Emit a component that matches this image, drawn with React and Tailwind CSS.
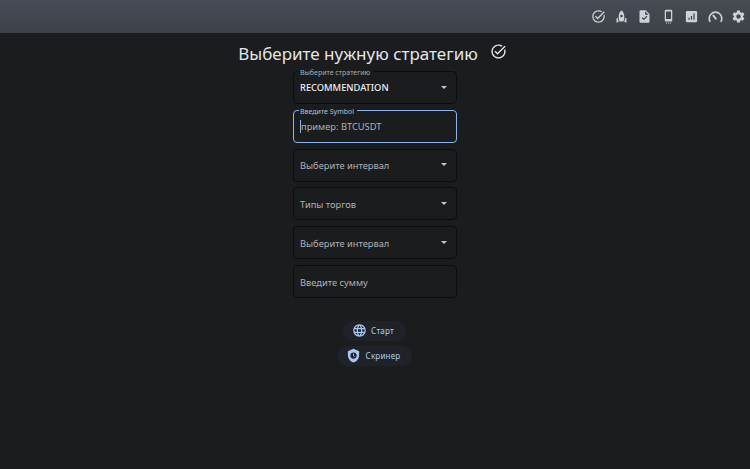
import React from 'react';

const icons = {
  task: 'M22 5.18 10.59 16.6l-4.24-4.24 1.41-1.41 2.83 2.83 10-10L22 5.18zm-2.21 5.04c.13.57.21 1.17.21 1.78 0 4.42-3.58 8-8 8s-8-3.58-8-8 3.58-8 8-8c1.58 0 3.04.46 4.28 1.25l1.44-1.44C16.1 2.67 14.13 2 12 2 6.48 2 2 6.48 2 12s4.48 10 10 10 10-4.48 10-10c0-1.19-.22-2.33-.6-3.39l-1.61 1.61z',
  rocket: 'M12 2.5s4.5 2.04 4.5 10.5c0 2.49-1.04 5.57-1.6 7H9.1c-.56-1.43-1.6-4.51-1.6-7C7.5 4.54 12 2.5 12 2.5zm2 8.5c0-1.1-.9-2-2-2s-2 .9-2 2 .9 2 2 2 2-.9 2-2zm-6.31 9.52c-.48-1.23-1.52-4.17-1.67-6.87l-1.13.75c-.56.38-.89 1-.89 1.67V22l3.69-1.48zM20 22v-5.93c0-.67-.33-1.29-.89-1.66l-1.13-.75c-.15 2.69-1.2 5.64-1.67 6.87L20 22z',
  file: 'M14 2H6c-1.1 0-1.99.9-1.99 2L4 20c0 1.1.89 2 1.99 2H18c1.1 0 2-.9 2-2V8l-6-6zm-3.06 16L7.4 14.46l1.41-1.41 2.12 2.12 4.24-4.24 1.41 1.41L10.94 18zM13 9V3.5L18.5 9H13z',
  phone: 'M16 1H8C6.9 1 6 1.9 6 3v15c0 1.1.9 2 2 2h8c1.1 0 2-.9 2-2V3c0-1.1-.9-2-2-2zm0 15H8V4h8v12zM8 21.5h1.6V23H8zm3.2 0h1.6V23h-1.6zm3.2 0H16V23h-1.6z',
  chart: 'M19 3H5c-1.1 0-2 .9-2 2v14c0 1.1.9 2 2 2h14c1.1 0 2-.9 2-2V5c0-1.1-.9-2-2-2zM9 17H7v-3h2v3zm4 0h-2v-6h2v6zm4 0h-2V7h2v10z',
  gear: 'M19.14 12.94c.04-.3.06-.61.06-.94 0-.32-.02-.64-.07-.94l2.03-1.58c.18-.14.23-.41.12-.61l-1.92-3.32c-.12-.22-.37-.29-.59-.22l-2.39.96c-.5-.38-1.03-.7-1.62-.94l-.36-2.54c-.04-.24-.24-.41-.48-.41h-3.84c-.24 0-.43.17-.47.41l-.36 2.54c-.59.24-1.13.57-1.62.94l-2.39-.96c-.22-.08-.47 0-.59.22L2.74 8.87c-.12.21-.08.47.12.61l2.03 1.58c-.05.3-.09.63-.09.94s.02.64.07.94l-2.03 1.58c-.18.14-.23.41-.12.61l1.92 3.32c.12.22.37.29.59.22l2.39-.96c.5.38 1.03.7 1.62.94l.36 2.54c.05.24.24.41.48.41h3.84c.24 0 .44-.17.47-.41l.36-2.54c.59-.24 1.13-.56 1.62-.94l2.39.96c.22.08.47 0 .59-.22l1.92-3.32c.12-.22.07-.47-.12-.61l-2.01-1.58zM12 15.6c-1.98 0-3.6-1.62-3.6-3.6s1.62-3.6 3.6-3.6 3.6 1.62 3.6 3.6-1.62 3.6-3.6 3.6z',
  globe: 'M11.99 2C6.47 2 2 6.48 2 12s4.47 10 9.99 10C17.52 22 22 17.52 22 12S17.52 2 11.99 2zm6.93 6h-2.95c-.32-1.25-.78-2.45-1.38-3.56 1.84.63 3.37 1.91 4.33 3.56zM12 4.04c.83 1.2 1.48 2.53 1.91 3.96h-3.82c.43-1.43 1.08-2.76 1.91-3.96zM4.26 14C4.1 13.36 4 12.69 4 12s.1-1.36.26-2h3.38c-.08.66-.14 1.32-.14 2 0 .68.06 1.34.14 2H4.26zm.82 2h2.95c.32 1.25.78 2.45 1.38 3.56-1.84-.63-3.37-1.9-4.33-3.56zm2.95-8H5.08c.96-1.66 2.49-2.93 4.33-3.56C8.81 5.55 8.35 6.75 8.03 8zM12 19.96c-.83-1.2-1.48-2.53-1.91-3.96h3.82c-.43 1.43-1.08 2.76-1.91 3.96zM14.34 14H9.66c-.09-.66-.16-1.32-.16-2 0-.68.07-1.35.16-2h4.68c.09.65.16 1.32.16 2 0 .68-.07 1.34-.16 2zm.25 5.56c.6-1.11 1.06-2.31 1.38-3.56h2.95c-.96 1.65-2.49 2.93-4.33 3.56zM16.36 14c.08-.66.14-1.32.14-2 0-.68-.06-1.34-.14-2h3.38c.16.64.26 1.31.26 2s-.1 1.36-.26 2h-3.38z',
};

function Icon({ name, className }) {
  return (
    <svg viewBox="0 0 24 24" fill="currentColor" className={className}>
      <path d={icons[name]} />
    </svg>
  );
}

function Gauge({ className }) {
  return (
    <svg viewBox="0 0 24 24" fill="none" stroke="currentColor" strokeWidth="2.6" className={className}>
      <path d="M3.5 20.5C2.400 18.500 2 16.800 2 15a10 10 0 0 1 20 0c0 1.800-.4 3.500-1.500 5.500" />
      <path strokeWidth="3" strokeLinecap="round" d="M12.500 15.500 8.500 10.500" />
    </svg>
  );
}

function Field({ label, value, arrow, strong }) {
  return (
    <div className="relative h-[33px] w-[164px] shrink-0">
      <fieldset className="absolute inset-0 rounded-[4px] border border-[#0c0d0f] pl-[5px]">
        {label && <legend className="invisible px-[2px] text-[7px] leading-[1px]">{label}</legend>}
      </fieldset>
      {label && (
        <span className="absolute left-[7px] top-[-3px] text-[7px] leading-[9px] text-[#a9acaf]">{label}</span>
      )}
      <div className="relative flex h-full items-center justify-between pl-[7px] pr-[10px]">
        <span className={strong ? 'mt-[1px] text-[9.300px] font-medium text-[#eceded]' : 'mt-[2px] text-[9.300px] text-[#b0b2b5]'}>{value}</span>
        {arrow && <span className="mb-[1px] h-0 w-0 border-x-[3.500px] border-t-[3.500px] border-x-transparent border-t-[#c4c6c8]" />}
      </div>
    </div>
  );
}

function ActionButton({ icon, children, className }) {
  return (
    <button className={`flex h-[20px] items-center justify-center rounded-full bg-[#1f2329] text-[8px] tracking-[0.2px] text-[#b4cbea] ${className}`}>
      {icon}
      {children}
    </button>
  );
}

export default function App() {
  return (
    <div className="flex h-[469px] w-[750px] flex-col overflow-hidden bg-[#1a1c1e] font-['Noto_Sans',sans-serif]">
      <header className="flex h-[33px] shrink-0 items-center justify-end gap-[8.400px] bg-gradient-to-b from-[#474c54] to-[#3d4249] pr-[4px] text-[#cfd1d4]">
        <Icon name="task" className="h-[15px] w-[15px]" />
        <Icon name="rocket" className="h-[15px] w-[15px]" />
        <Icon name="file" className="h-[15px] w-[15px]" />
        <Icon name="phone" className="h-[15px] w-[15px]" />
        <Icon name="chart" className="h-[15px] w-[15px]" />
        <Gauge className="h-[15px] w-[15px]" />
        <Icon name="gear" className="h-[15px] w-[15px]" />
      </header>

      <main className="flex flex-col items-center">
        <div className="mt-[7px] mr-[5px] flex h-[27px] items-center gap-[12px]">
          <h1 className="text-[17px] font-normal text-[#e4e5e6]">Выберите нужную стратегию</h1>
          <Icon name="task" className="mb-[4px] h-[17px] w-[17px] text-[#e4e5e6]" />
        </div>

        <div className="mt-[4px] flex flex-col gap-[5.800px]">
          <Field label="Выберите стратегию" value="RECOMMENDATION" arrow strong />

          <div className="relative h-[33px] w-[164px]">
            <fieldset className="absolute inset-0 rounded-[4px] border-[1.500px] border-[#8ab4f0] pl-[5px]">
              <legend className="invisible px-[2px] text-[7px] leading-[1px]">Введите Symbol</legend>
            </fieldset>
            <span className="absolute left-[7px] top-[-3px] text-[7px] leading-[9px] text-[#a9c0dc]">Введите Symbol</span>
            <div className="relative flex h-full items-center pl-[7px]">
              <span className="h-[13px] w-px bg-[#8ab4f0]" />
              <span className="mt-[1px] text-[9.300px] text-[#b0b2b5]">пример: BTCUSDT</span>
            </div>
          </div>

          <Field value="Выберите интервал" arrow />
          <Field value="Типы торгов" arrow />
          <Field value="Выберите интервал" arrow />
          <Field value="Введите сумму" />
        </div>

        <div className="mt-[23px] mr-[1px] flex flex-col items-center gap-[5px]">
          <ActionButton className="w-[63px] gap-[4px] pr-[3px]" icon={<Icon name="globe" className="h-[15px] w-[15px] text-[#a9c7ee]" />}>Старт</ActionButton>
          <ActionButton
            className="w-[75px] gap-[5px] pr-[3px]"
            icon={
              <svg viewBox="0 0 24 24" className="h-[15px] w-[15px]">
                <path fill="#a9c7ee" d="M12 1 3 5v6c0 5.55 3.84 10.74 9 12 5.16-1.26 9-6.45 9-12V5l-9-4z" />
                <circle cx="12" cy="12" r="5" fill="#1f2329" />
                <path stroke="#a9c7ee" strokeWidth="1.500" fill="none" d="M12 9v3.400l2 1.400" />
              </svg>
            }
          >
            Скринер
          </ActionButton>
        </div>
      </main>
    </div>
  );
}
